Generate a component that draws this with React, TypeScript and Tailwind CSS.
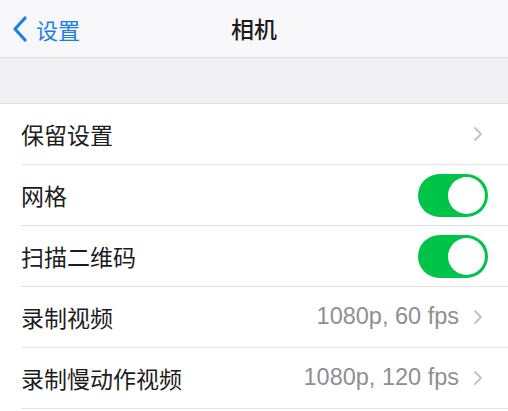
const rows: { label: string; value?: string; toggle?: boolean }[] = [
  { label: "保留设置", value: "" },
  { label: "网格", toggle: true },
  { label: "扫描二维码", toggle: true },
  { label: "录制视频", value: "1080p, 60 fps" },
  { label: "录制慢动作视频", value: "1080p, 120 fps" },
];

function Chevron() {
  return (
    <svg width="10" height="16" viewBox="0 0 10 16" className="ml-[14px]">
      <path d="M2 2l6 6-6 6" fill="none" stroke="#c4c4c8" strokeWidth="2" strokeLinecap="round" strokeLinejoin="round" />
    </svg>
  );
}

function Toggle() {
  return (
    <div className="w-[70px] h-[43px] rounded-full bg-[#00c447] flex items-center justify-end pr-[3px]">
      <div className="w-[37px] h-[37px] rounded-full bg-white" />
    </div>
  );
}

export default function App() {
  return (
    <div
      className="w-[508px] h-[411px] overflow-hidden bg-white text-[#1c1c1e]"
      style={{ fontFamily: '"Noto Sans CJK SC", "Noto Sans", sans-serif' }}
    >
      <div className="relative h-[58px] bg-[#f8f8fa] border-b border-[#dcdce0] flex items-center justify-center">
        <div className="absolute left-[12px] top-0 h-full flex items-center text-[#1a7fe8]">
          <svg width="16" height="26" viewBox="0 0 16 26">
            <path d="M13 2L3 13l10 11" fill="none" stroke="currentColor" strokeWidth="3.2" strokeLinecap="round" strokeLinejoin="round" />
          </svg>
          <span className="ml-[8px] text-[22px] leading-none">设置</span>
        </div>
        <span className="text-[23px] font-medium leading-none">相机</span>
      </div>
      <div className="h-[46px] bg-[#efeff4] border-b border-[#e2e2e6]" />
      {rows.map((r) => (
        <div key={r.label} className="pl-[21px]">
          <div className="h-[61px] border-b border-[#e4e4e8] flex items-center pr-[20px]">
            <span className="text-[23px] leading-none flex-1">{r.label}</span>
            {r.toggle ? (
              <Toggle />
            ) : (
              <div className="flex items-center pr-[5px]">
                <span
                  className="text-[23.5px] text-[#8e8e93] leading-none"
                  style={{ fontFamily: '"Liberation Sans", Arial, sans-serif' }}
                >
                  {r.value}
                </span>
                <Chevron />
              </div>
            )}
          </div>
        </div>
      ))}
    </div>
  );
}
